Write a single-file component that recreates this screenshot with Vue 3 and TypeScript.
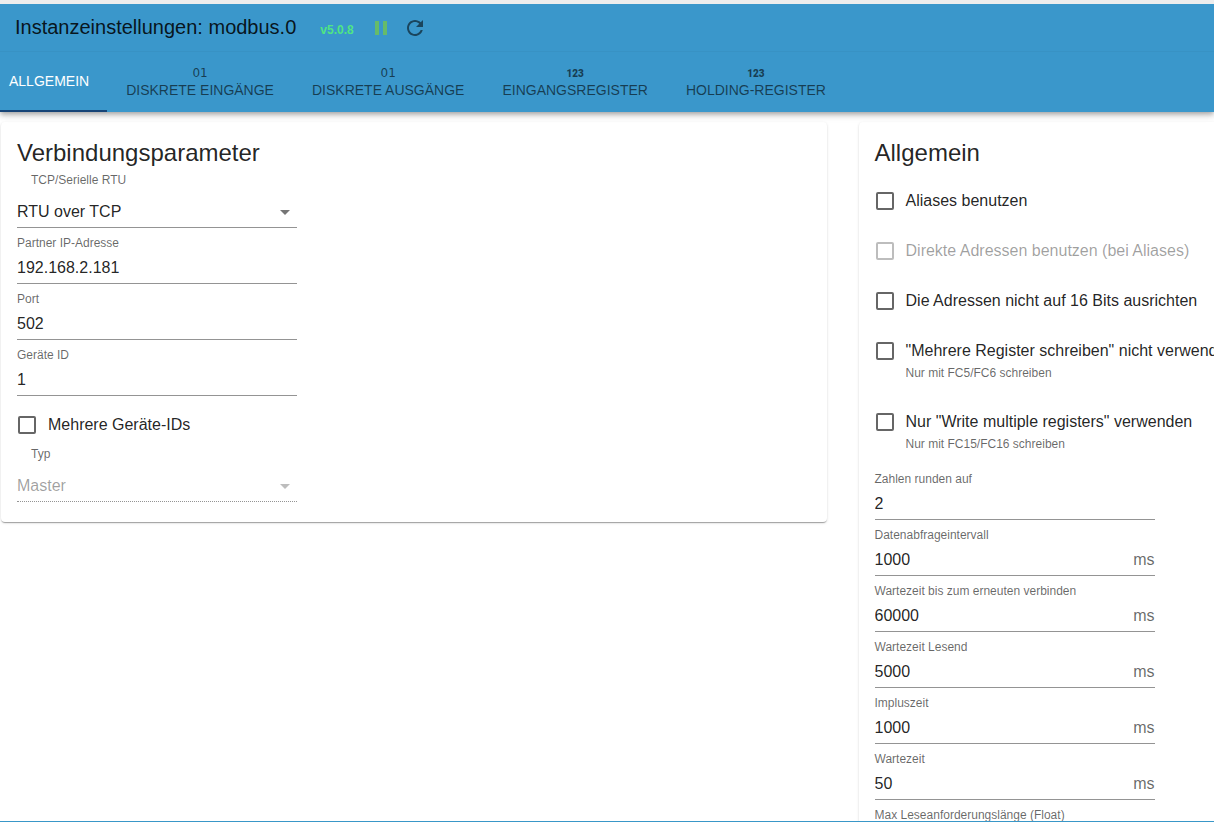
<script setup lang="ts">
import { ref } from 'vue'

interface Tab {
  id: string
  label: string
  mark?: string
  bold?: boolean
}
interface Field {
  id: string
  label: string
  value: string
  unit?: string
}
interface Option {
  id: string
  label: string
  checked: boolean
  disabled?: boolean
  helper?: string
}

const tabs: Tab[] = [
  { id: 'general', label: 'ALLGEMEIN' },
  { id: 'inputs', label: 'DISKRETE EINGÄNGE', mark: '01' },
  { id: 'outputs', label: 'DISKRETE AUSGÄNGE', mark: '01' },
  { id: 'input-registers', label: 'EINGANGSREGISTER', mark: '123', bold: true },
  { id: 'holding-registers', label: 'HOLDING-REGISTER', mark: '123', bold: true },
]
const activeTab = ref('general')

const transport = ref('RTU over TCP')
const role = ref('Master')
const multiDevice = ref(false)

const connection = ref<Field[]>([
  { id: 'ip', label: 'Partner IP-Adresse', value: '192.168.2.181' },
  { id: 'port', label: 'Port', value: '502' },
  { id: 'device', label: 'Geräte ID', value: '1' },
])

const options = ref<Option[]>([
  { id: 'aliases', label: 'Aliases benutzen', checked: false },
  { id: 'direct', label: 'Direkte Adressen benutzen (bei Aliases)', checked: false, disabled: true },
  { id: 'align', label: 'Die Adressen nicht auf 16 Bits ausrichten', checked: false },
  {
    id: 'no-multi',
    label: '"Mehrere Register schreiben" nicht verwenden',
    checked: false,
    helper: 'Nur mit FC5/FC6 schreiben',
  },
  {
    id: 'only-multi',
    label: 'Nur "Write multiple registers" verwenden',
    checked: false,
    helper: 'Nur mit FC15/FC16 schreiben',
  },
])

const timing = ref<Field[]>([
  { id: 'round', label: 'Zahlen runden auf', value: '2' },
  { id: 'poll', label: 'Datenabfrageintervall', value: '1000', unit: 'ms' },
  { id: 'reconnect', label: 'Wartezeit bis zum erneuten verbinden', value: '60000', unit: 'ms' },
  { id: 'read', label: 'Wartezeit Lesend', value: '5000', unit: 'ms' },
  { id: 'pulse', label: 'Impluszeit', value: '1000', unit: 'ms' },
  { id: 'wait', label: 'Wartezeit', value: '50', unit: 'ms' },
  { id: 'max-read', label: 'Max Leseanforderungslänge (Float)', value: '100' },
])
</script>

<template>
  <div class="page">
    <header class="app-bar">
      <div class="title-row">
        <h1 class="title">Instanzeinstellungen: modbus.0</h1>
        <span class="version">v5.0.8</span>
        <button class="icon-button pause" type="button" aria-label="Pause">
          <svg viewBox="0 0 24 24"><path d="M6 19h4V5H6v14zm8-14v14h4V5h-4z" /></svg>
        </button>
        <button class="icon-button" type="button" aria-label="Neu starten">
          <svg viewBox="0 0 24 24">
            <path
              d="M17.65 6.35C16.2 4.9 14.21 4 12 4c-4.42 0-7.99 3.58-7.99 8s3.57 8 7.99 8c3.73 0 6.84-2.55 7.73-6h-2.08c-.82 2.33-3.04 4-5.65 4-3.31 0-6-2.69-6-6s2.69-6 6-6c1.66 0 3.14.69 4.22 1.78L13 11h7V4l-2.35 2.35z"
            />
          </svg>
        </button>
      </div>
      <nav class="tabs" role="tablist">
        <button
          v-for="tab in tabs"
          :key="tab.id"
          class="tab"
          :class="{ active: tab.id === activeTab }"
          type="button"
          role="tab"
          :aria-selected="tab.id === activeTab"
          @click="activeTab = tab.id"
        >
          <span v-if="tab.mark" class="mark" :class="{ bold: tab.bold }">{{ tab.mark }}</span>
          <span class="tab-label">{{ tab.label }}</span>
        </button>
      </nav>
    </header>

    <main class="content">
      <section class="card">
        <h2 class="heading">Verbindungsparameter</h2>
        <div class="field">
          <label class="select-label" for="transport">TCP/Serielle RTU</label>
          <div class="control">
            <select id="transport" v-model="transport">
              <option>RTU over TCP</option>
              <option>TCP</option>
              <option>Serial</option>
            </select>
            <svg class="arrow" viewBox="0 0 24 24"><path d="M7 10l5 5 5-5z" /></svg>
          </div>
        </div>
        <div v-for="field in connection" :key="field.id" class="field">
          <label class="field-label" :for="field.id">{{ field.label }}</label>
          <div class="control"><input :id="field.id" v-model="field.value" type="text" /></div>
        </div>
        <label class="check">
          <input v-model="multiDevice" type="checkbox" />
          <span>Mehrere Geräte-IDs</span>
        </label>
        <div class="field">
          <label class="select-label" for="role">Typ</label>
          <div class="control disabled">
            <select id="role" v-model="role" disabled>
              <option>Master</option>
              <option>Slave</option>
            </select>
            <svg class="arrow" viewBox="0 0 24 24"><path d="M7 10l5 5 5-5z" /></svg>
          </div>
        </div>
      </section>

      <section class="card">
        <h2 class="heading">Allgemein</h2>
        <template v-for="option in options" :key="option.id">
          <label class="check" :class="{ off: option.disabled }">
            <input v-model="option.checked" type="checkbox" :disabled="option.disabled" />
            <span>{{ option.label }}</span>
          </label>
          <p v-if="option.helper" class="helper">{{ option.helper }}</p>
        </template>
        <div v-for="field in timing" :key="field.id" class="field">
          <label class="field-label" :for="field.id">{{ field.label }}</label>
          <div class="control">
            <input :id="field.id" v-model="field.value" type="text" />
            <span v-if="field.unit" class="unit">{{ field.unit }}</span>
          </div>
        </div>
      </section>
    </main>
  </div>
</template>

<style>
body {
  margin: 0;
  background: #fff;
}
</style>

<style scoped>
* {
  box-sizing: border-box;
}
.page {
  display: flex;
  flex-direction: column;
  height: 100vh;
  overflow: hidden;
  border-top: 4px solid #ededed;
  border-bottom: 1px solid #3997c8;
  background: #fff;
  color: rgba(0, 0, 0, 0.87);
  font-family: "Liberation Sans", Arial, sans-serif;
  font-size: 16px;
}
button,
input,
select {
  font: inherit;
  color: inherit;
}
.app-bar {
  position: relative;
  z-index: 1;
  flex: none;
  background: #3a97cb;
  box-shadow:
    0 2px 4px -1px rgba(0, 0, 0, 0.2),
    0 4px 5px 0 rgba(0, 0, 0, 0.14),
    0 1px 10px 0 rgba(0, 0, 0, 0.12);
}
.title-row {
  display: flex;
  align-items: center;
  height: 48px;
  padding-left: 15px;
  border-bottom: 1px solid rgba(0, 0, 0, 0.03);
}
.title {
  margin: 0;
  padding-bottom: 2px;
  font-size: 20px;
  font-weight: 400;
  line-height: 32px;
}
.version {
  margin: 4px 15px 0 24px;
  color: #50e584;
  font-size: 12px;
  font-weight: 700;
}
.icon-button {
  display: flex;
  width: 24px;
  height: 24px;
  margin-right: 10px;
  padding: 0;
  border: 0;
  background: none;
  color: rgba(0, 0, 0, 0.54);
  cursor: pointer;
}
.icon-button svg {
  width: 24px;
  height: 24px;
  fill: currentColor;
}
.icon-button.pause {
  color: #66bb6a;
}
.tabs {
  display: flex;
}
.tab {
  display: flex;
  flex-direction: column;
  align-items: center;
  justify-content: center;
  height: 60px;
  padding: 0 19px;
  border: 0;
  background: none;
  color: rgba(0, 0, 0, 0.6);
  font-size: 14px;
  white-space: nowrap;
  cursor: pointer;
}
.tab:first-child {
  padding: 0 18px 2px 9px;
}
.tab.active {
  color: #fff;
  box-shadow: inset 0 -2px #164477;
}
.tab-label {
  line-height: 18px;
}
.mark {
  font-family: "DejaVu Sans", sans-serif;
  font-size: 12px;
  line-height: 16px;
}
.mark.bold {
  padding-top: 2px;
  font-family: Roboto, sans-serif;
  font-size: 10px;
  font-weight: 900;
  line-height: 14px;
}
.content {
  display: grid;
  grid-template-columns: 68vw 68vw;
  gap: 32px;
  align-items: start;
  flex: 1;
  min-height: 0;
  padding: 10px 0 0 1px;
  overflow: hidden;
}
.card {
  display: flex;
  flex-direction: column;
  padding: 16px 16px 20px;
  border-radius: 4px;
  background: #fff;
  box-shadow:
    0 2px 1px -1px rgba(0, 0, 0, 0.2),
    0 1px 1px 0 rgba(0, 0, 0, 0.14),
    0 1px 3px 0 rgba(0, 0, 0, 0.12);
}
.heading {
  margin: 0 0 4px;
  font-size: 24px;
  font-weight: 400;
  line-height: 30px;
}
.field {
  width: 280px;
}
.field-label,
.select-label {
  display: block;
  color: rgba(0, 0, 0, 0.6);
  font-size: 12px;
  line-height: 16px;
}
.field-label {
  padding: 7px 0 1px;
}
.select-label {
  padding: 0 0 8px 14px;
}
.control {
  position: relative;
  display: flex;
  align-items: center;
  height: 32px;
  border-bottom: 1px solid #949494;
}
.control.disabled {
  border-bottom-style: dotted;
  color: rgba(0, 0, 0, 0.38);
}
.control input,
.control select {
  flex: 1;
  min-width: 0;
  height: 100%;
  padding: 0;
  border: 0;
  outline: 0;
  background: none;
  appearance: none;
}
.control select:disabled {
  opacity: 1;
}
.arrow {
  position: absolute;
  right: 0;
  width: 24px;
  height: 24px;
  fill: rgba(0, 0, 0, 0.54);
  pointer-events: none;
}
.disabled .arrow {
  fill: rgba(0, 0, 0, 0.26);
}
.unit {
  color: rgba(0, 0, 0, 0.6);
}
.check {
  display: flex;
  align-items: center;
  gap: 12px;
  width: max-content;
  height: 42px;
  margin-top: 8px;
  white-space: nowrap;
  cursor: pointer;
}
.check input {
  width: 18px;
  height: 18px;
  margin: 0 0 0 1px;
  border: 2px solid #666;
  border-radius: 2px;
  background: #fff;
  appearance: none;
}
.check input:checked {
  background: #3a97cb;
}
.check.off {
  color: rgba(0, 0, 0, 0.38);
  cursor: default;
}
.check.off input {
  border-color: #bdbdbd;
}
.helper {
  margin: -7px 0 12px 31px;
  color: rgba(0, 0, 0, 0.6);
  font-size: 12px;
  line-height: 16px;
}
</style>
